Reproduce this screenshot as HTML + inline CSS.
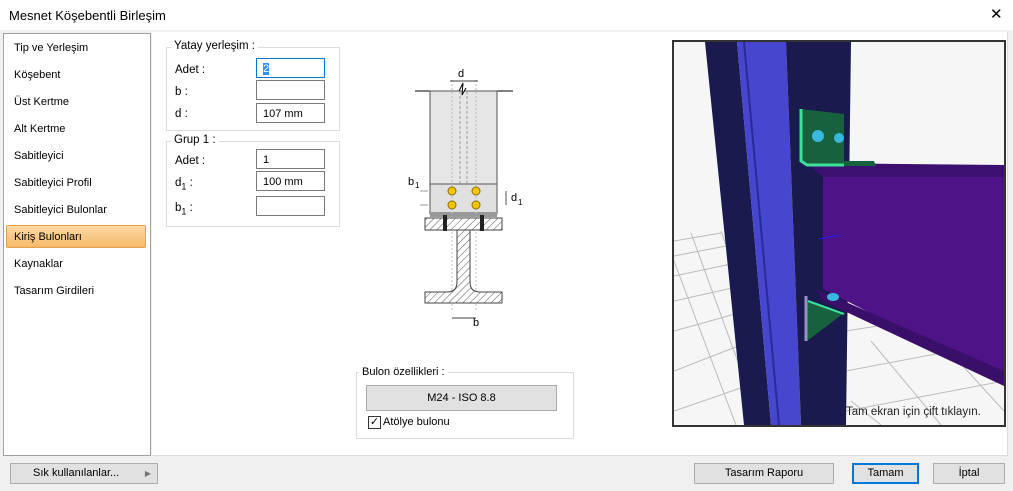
<!DOCTYPE html>
<html><head><meta charset="utf-8"><style>
body{margin:0;width:1013px;height:491px;background:#f0f0f0;font-family:"Liberation Sans",sans-serif;font-size:11.5px;color:#000;position:relative;overflow:hidden}
.a{position:absolute}
.title{left:0;top:0;width:1013px;height:30px;background:#fff;font-size:13px}
.list{left:3px;top:33px;width:146px;height:421px;background:#fff;border:1px solid #a0a0a0}
.list div{position:absolute;left:10px;font-size:11px}
.main{left:152px;top:32px;width:855px;height:423px;background:#fff;border-right:1px solid #ddd;border-bottom:1px solid #ddd}
.grp{border:1px solid #dcdcdc}
.lg{background:#fff;padding:0 3px;font-size:11.5px}
.inp{border:1px solid #7a7a7a;background:#fff;height:20px;width:69px;font-size:11px;line-height:20px;padding-left:6px;box-sizing:border-box}
.btn{background:#e1e1e1;border:1px solid #adadad;text-align:center;box-sizing:border-box;font-size:11.5px}
</style></head><body>
<div class="a title"><span class="a" style="left:9px;top:8px">Mesnet Köşebentli Birleşim</span><span class="a" style="left:990px;top:5px;font-size:15px">✕</span></div>
<div class="a list">
<div style="top:8px">Tip ve Yerleşim</div>
<div style="top:35px">Köşebent</div>
<div style="top:62px">Üst Kertme</div>
<div style="top:89px">Alt Kertme</div>
<div style="top:116px">Sabitleyici</div>
<div style="top:143px">Sabitleyici Profil</div>
<div style="top:170px">Sabitleyici Bulonlar</div>
<div style="left:2px;top:191px;width:140px;height:23px;background:linear-gradient(#fbd9a4,#f7b96b);border:1px solid #e2a050;border-radius:2px;box-sizing:border-box"></div>
<div style="top:197px">Kiriş Bulonları</div>
<div style="top:224px">Kaynaklar</div>
<div style="top:251px">Tasarım Girdileri</div>
</div>
<div class="a main"></div>
<div class="a grp" style="left:166px;top:47px;width:172px;height:82px"></div>
<span class="a lg" style="left:171px;top:40px">Yatay yerleşim :</span>
<span class="a" style="left:175px;top:64px">Adet :</span>
<span class="a" style="left:175px;top:86px">b :</span>
<span class="a" style="left:175px;top:108px">d :</span>
<div class="a inp" style="left:256px;top:58px;border-color:#0078d7"><span style="background:#3390ff;color:#fff">2</span></div>
<div class="a inp" style="left:256px;top:80px"></div>
<div class="a inp" style="left:256px;top:103px">107 mm</div>
<div class="a grp" style="left:166px;top:141px;width:172px;height:84px"></div>
<span class="a lg" style="left:171px;top:134px">Grup 1 :</span>
<span class="a" style="left:175px;top:155px">Adet :</span>
<span class="a" style="left:175px;top:177px">d<sub style="font-size:9px">1</sub> :</span>
<span class="a" style="left:175px;top:202px">b<sub style="font-size:9px">1</sub> :</span>
<div class="a inp" style="left:256px;top:149px">1</div>
<div class="a inp" style="left:256px;top:171px">100 mm</div>
<div class="a inp" style="left:256px;top:196px"></div>
<svg class="a" style="left:380px;top:60px" width="160" height="270" viewBox="0 0 160 270">
<defs><pattern id="h" width="5" height="5" patternUnits="userSpaceOnUse" patternTransform="rotate(45)"><rect width="5" height="5" fill="#fff"/><line x1="0" y1="0" x2="0" y2="5" stroke="#555" stroke-width="1"/></pattern></defs>
<line x1="35" y1="31" x2="133" y2="31" stroke="#000"/>
<rect x="50" y="31" width="67" height="93" fill="#e6e6e6" stroke="#555"/>
<rect x="50" y="124" width="67" height="30" fill="#e0e0e0" stroke="#555"/>
<rect x="50" y="152" width="67" height="5" fill="#999"/>
<line x1="72" y1="20" x2="72" y2="250" stroke="#bbb" stroke-dasharray="2,2"/>
<line x1="96" y1="20" x2="96" y2="250" stroke="#bbb" stroke-dasharray="2,2"/>
<line x1="80" y1="31" x2="80" y2="124" stroke="#999" stroke-dasharray="3,2"/>
<line x1="87" y1="31" x2="87" y2="124" stroke="#999" stroke-dasharray="3,2"/>
<path d="M79 31 L83 23 L82 35 L86 28" stroke="#000" fill="#fff"/>
<text x="78" y="17" font-size="11">d</text>
<line x1="70" y1="21" x2="98" y2="21" stroke="#000" stroke-width=".7"/>
<circle cx="72" cy="131" r="4" fill="#f5c400" stroke="#8a6d00"/><circle cx="96" cy="131" r="4" fill="#f5c400" stroke="#8a6d00"/>
<circle cx="72" cy="145" r="4" fill="#f5c400" stroke="#8a6d00"/><circle cx="96" cy="145" r="4" fill="#f5c400" stroke="#8a6d00"/>
<text x="28" y="125" font-size="11">b</text><text x="35" y="128" font-size="8">1</text>
<line x1="40" y1="131" x2="48" y2="131" stroke="#555" stroke-width=".6"/><line x1="40" y1="145" x2="48" y2="145" stroke="#555" stroke-width=".6"/>
<text x="131" y="141" font-size="11">d</text><text x="138" y="145" font-size="8">1</text>
<line x1="126" y1="131" x2="126" y2="145" stroke="#555"/>
<rect x="45" y="158" width="77" height="12" fill="url(#h)" stroke="#444"/>
<rect x="63" y="155" width="4" height="16" fill="#222"/><rect x="100" y="155" width="4" height="16" fill="#222"/>
<path d="M77 170 L77 222 Q77 232 67 232 L45 232 L45 243 L122 243 L122 232 L100 232 Q90 232 90 222 L90 170 Z" fill="url(#h)" stroke="#444"/>
<line x1="72" y1="258" x2="96" y2="258" stroke="#000" stroke-width=".7"/>
<text x="93" y="266" font-size="11">b</text>
</svg>
<div class="a grp" style="left:356px;top:372px;width:216px;height:65px"></div>
<span class="a lg" style="left:359px;top:366px;font-size:11px">Bulon özellikleri :</span>
<div class="a btn" style="left:366px;top:385px;width:191px;height:26px;line-height:24px;font-size:11px">M24 - ISO 8.8</div>
<div class="a" style="left:368px;top:416px;width:11px;height:11px;border:1px solid #333;background:#fff;font-size:11px;line-height:11px;text-align:center">✓</div>
<span class="a" style="left:383px;top:416px;font-size:11px">Atölye bulonu</span>
<div class="a" style="left:672px;top:40px;width:330px;height:383px;border:2px solid #333;background:#f6f6f6;overflow:hidden">
<svg width="330" height="383" viewBox="673 41 330 383" style="display:block">
<g stroke="#bbb" stroke-width="1" fill="none">
<path d="M673 240 L720 232 M673 255 L725 245 M673 275 L735 262 M673 300 L740 285 M673 330 L745 310 M673 370 L750 340 M673 410 L760 380 M690 232 L760 424 M673 260 L735 424 M720 230 L745 300"/>
<path d="M845 330 L1003 305 M845 370 L1003 340 M845 410 L1003 380 M870 340 L940 424 M930 330 L1003 410 M980 320 L1003 350 M850 400 L880 424"/>
</g>
<polygon points="704,41 736,41 770,424 743,424" fill="#1a1a4e"/>
<polygon points="736,41 785,41 800,424 770,424" fill="#4646cf"/>
<line x1="743" y1="41" x2="778" y2="424" stroke="#2a2a9a" stroke-width="2"/>
<polygon points="785,41 850,41 845,424 800,424" fill="#1a1a4e"/>
<polygon points="822,168 1003,170 1003,380 822,288" fill="#4e1487"/>
<polygon points="806,162 1003,164 1003,176 822,176" fill="#3c1070"/>
<polygon points="815,288 1003,370 1003,385 822,300" fill="#3a0f6a"/>
<polygon points="800,108 843,113 843,160 873,160 875,165 806,165 800,160" fill="#17613f"/>
<path d="M800 108 L800 160 L806 164 L843 164" stroke="#3de09a" stroke-width="3" fill="none"/>
<circle cx="817" cy="135" r="6" fill="#38b8e0"/><circle cx="838" cy="137" r="5" fill="#38b8e0"/>
<polygon points="806,300 843,312 806,340" fill="#17613f"/>
<line x1="807" y1="300" x2="843" y2="313" stroke="#3de09a" stroke-width="2"/>
<line x1="805" y1="295" x2="805" y2="340" stroke="#9a8ec8" stroke-width="3"/>
<ellipse cx="832" cy="296" rx="6" ry="4" fill="#38b8e0"/>
<line x1="818" y1="238" x2="838" y2="234" stroke="#2020ff"/>
<text x="845" y="414" font-size="11.5" fill="#222" font-family="Liberation Sans">Tam ekran için çift tıklayın.</text>
</svg></div>
<div class="a btn" style="left:10px;top:463px;width:148px;height:21px;line-height:19px;text-align:left;padding-left:22px;font-size:11px">Sık kullanılanlar...<span style="position:absolute;right:6px;color:#777;font-size:8px">▶</span></div>
<div class="a btn" style="left:694px;top:463px;width:140px;height:21px;line-height:19px;font-size:11px">Tasarım Raporu</div>
<div class="a btn" style="left:852px;top:463px;width:67px;height:21px;line-height:17px;border:2px solid #0078d7;font-size:11px">Tamam</div>
<div class="a btn" style="left:933px;top:463px;width:72px;height:21px;line-height:19px;font-size:11px">İptal</div>
</body></html>
